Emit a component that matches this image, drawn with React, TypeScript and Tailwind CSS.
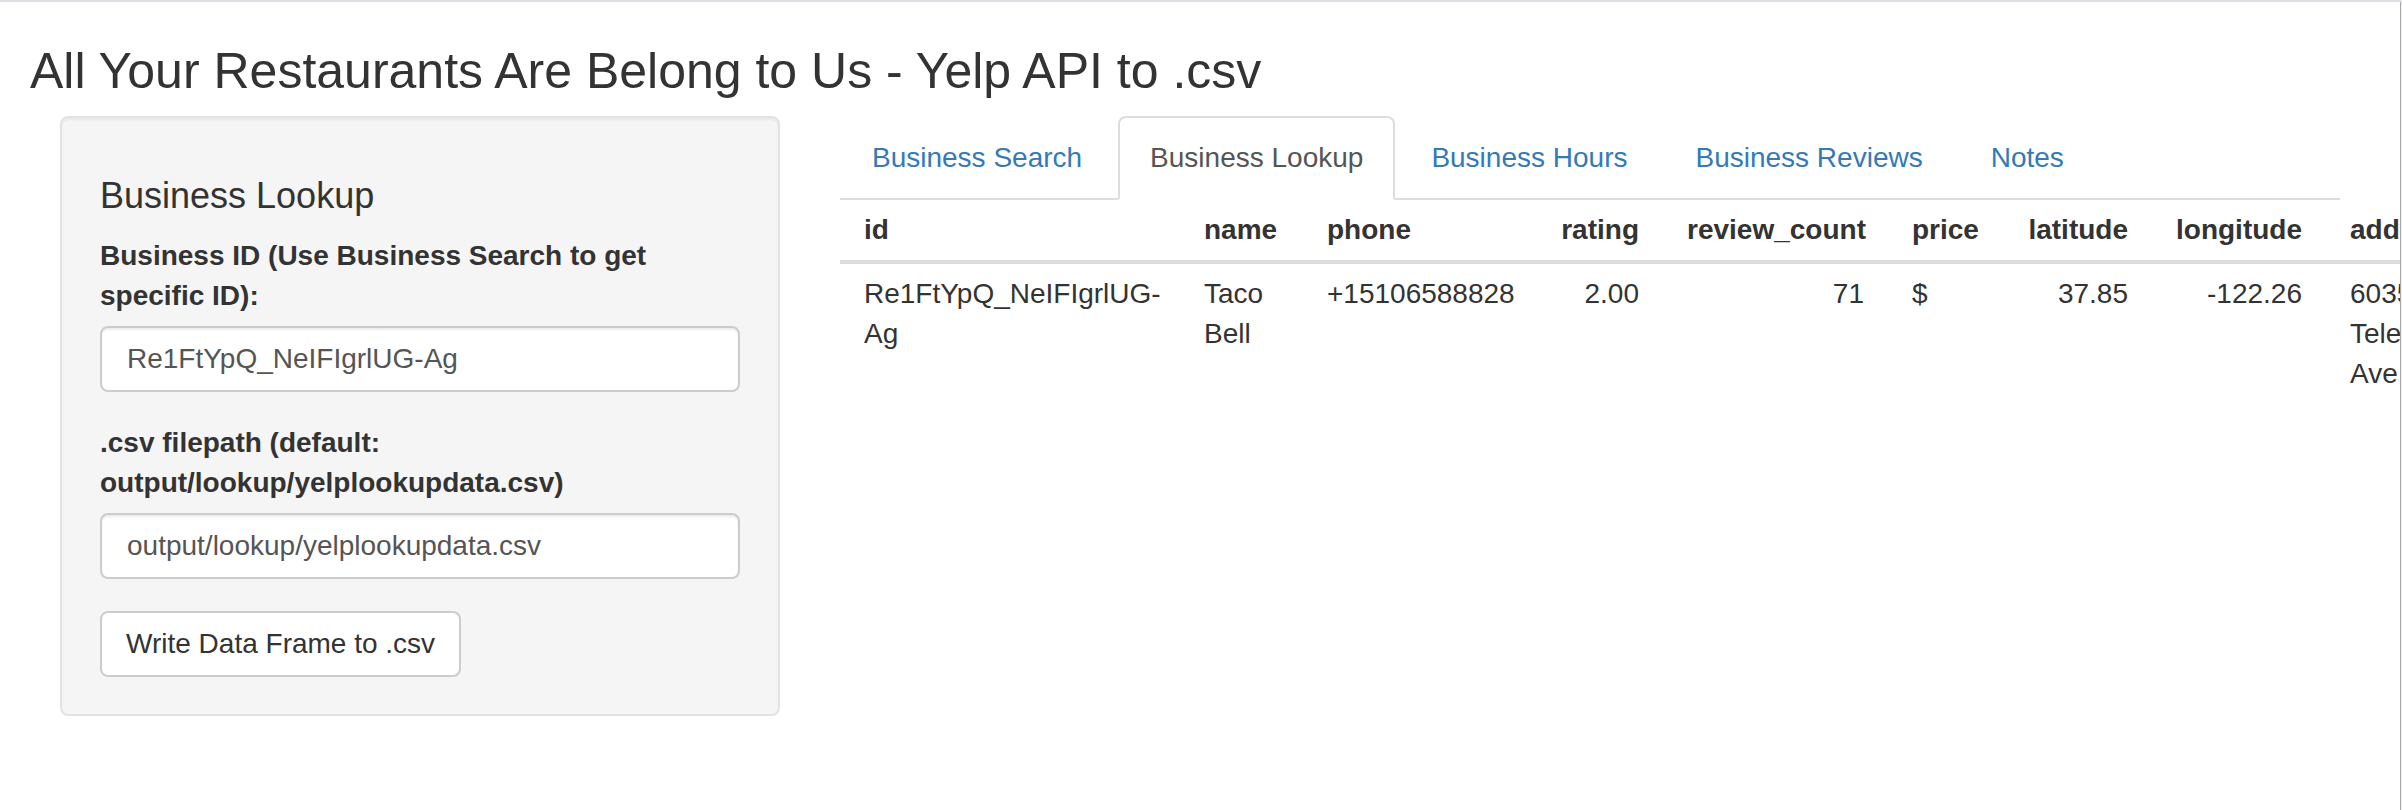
const tabs = ['Business Search', 'Business Lookup', 'Business Hours', 'Business Reviews', 'Notes']

type Col = { key: string; label: string; width: string; right?: boolean }

const columns: Col[] = [
  { key: 'id', label: 'id', width: 'w-[340px]' },
  { key: 'name', label: 'name', width: 'w-[123px]' },
  { key: 'phone', label: 'phone', width: 'w-[234px]' },
  { key: 'rating', label: 'rating', width: 'w-[126px]', right: true },
  { key: 'review_count', label: 'review_count', width: 'w-[225px]', right: true },
  { key: 'price', label: 'price', width: 'w-[116px]' },
  { key: 'latitude', label: 'latitude', width: 'w-[148px]', right: true },
  { key: 'longitude', label: 'longitude', width: 'w-[174px]', right: true },
  { key: 'address1', label: 'address1', width: 'w-[174px]' },
  { key: 'city', label: 'city', width: 'w-[180px]' },
  { key: 'state', label: 'state', width: 'w-[120px]' },
]

const row: Record<string, string> = {
  id: 'Re1FtYpQ_NeIFIgrlUG-Ag',
  name: 'Taco Bell',
  phone: '+15106588828',
  rating: '2.00',
  review_count: '71',
  price: '$',
  latitude: '37.85',
  longitude: '-122.26',
  address1: '6035 Telegraph Ave',
  city: 'Oakland',
  state: 'CA',
}

function Sidebar() {
  return (
    <div className="w-[720px] shrink-0 self-start rounded-[8px] border-2 border-[#e3e3e3] bg-[#f5f5f5] px-[38px] pt-[38px] pb-[37px] shadow-[inset_0_2px_2px_rgba(0,0,0,0.05)]">
      <h4 className="mt-[20px] mb-[20px] text-[36px] leading-[39.6px] font-normal">Business Lookup</h4>
      <div className="mb-[31px]">
        <label className="mb-[10px] block text-[28px] leading-[40px] font-bold">
          Business ID (Use Business Search to get specific ID):
        </label>
        <input
          readOnly
          value="Re1FtYpQ_NeIFIgrlUG-Ag"
          className="block h-[66px] w-full rounded-[8px] border-2 border-[#ccc] bg-white pl-[25px] pr-[24px] text-[28px] text-[#555] shadow-[inset_0_2px_2px_rgba(0,0,0,0.075)] outline-none"
        />
      </div>
      <div className="mb-[32px]">
        <label className="mb-[10px] block text-[28px] leading-[40px] font-bold">
          .csv filepath (default: output/lookup/yelplookupdata.csv)
        </label>
        <input
          readOnly
          value="output/lookup/yelplookupdata.csv"
          className="block h-[66px] w-full rounded-[8px] border-2 border-[#ccc] bg-white pl-[25px] pr-[24px] text-[28px] text-[#555] shadow-[inset_0_2px_2px_rgba(0,0,0,0.075)] outline-none"
        />
      </div>
      <button className="h-[66px] rounded-[8px] border-2 border-[#ccc] bg-white px-[24px] text-[28px] text-[#333]">
        Write Data Frame to .csv
      </button>
    </div>
  )
}

function MainPanel() {
  return (
    <div className="ml-[60px] w-[1500px] shrink-0">
      <ul className="flex border-b-2 border-[#ddd]">
        {tabs.map((t) => {
          const active = t === 'Business Lookup'
          return (
            <li key={t} className="mr-[4px] -mb-[2px]">
              <a
                className={
                  active
                    ? 'block rounded-t-[8px] border-2 border-[#ddd] border-b-transparent bg-white px-[30px] py-[20px] text-[28px] leading-[40px] text-[#555]'
                    : 'block rounded-t-[8px] border-2 border-transparent px-[30px] py-[20px] text-[28px] leading-[40px] text-[#337ab7]'
                }
              >
                {t}
              </a>
            </li>
          )
        })}
      </ul>
      <table className="w-[1860px] table-fixed border-collapse text-[28px] leading-[40px]">
        <thead>
          <tr>
            {columns.map((c) => (
              <th
                key={c.key}
                className={`${c.width} border-b-4 border-[#ddd] px-[24px] py-[10px] align-bottom font-bold ${c.right ? 'text-right' : 'text-left'}`}
              >
                {c.label}
              </th>
            ))}
          </tr>
        </thead>
        <tbody>
          <tr>
            {columns.map((c) => (
              <td key={c.key} className={`px-[24px] py-[10px] align-top ${c.right ? 'text-right' : 'text-left'}`}>
                {row[c.key]}
              </td>
            ))}
          </tr>
        </tbody>
      </table>
    </div>
  )
}

export default function App() {
  return (
    <div className="flex h-[810px] w-[2402px] overflow-hidden border-t-2 border-[#dde0e4] bg-white font-['Liberation_Sans',Arial,sans-serif] text-[#333]">
      <div className="w-[2400px] shrink-0 overflow-hidden">
        <h2 className="mt-[42px] ml-[30px] text-[50px] leading-[55px] font-normal">
          All Your Restaurants Are Belong to Us - Yelp API to .csv
        </h2>
        <div className="mt-[17px] flex pl-[60px]">
          <Sidebar />
          <MainPanel />
        </div>
      </div>
      <div className="w-[1px] shrink-0 bg-[#a9a9a9]" />
      <div className="w-[1px] shrink-0 bg-[#ececec]" />
    </div>
  )
}
